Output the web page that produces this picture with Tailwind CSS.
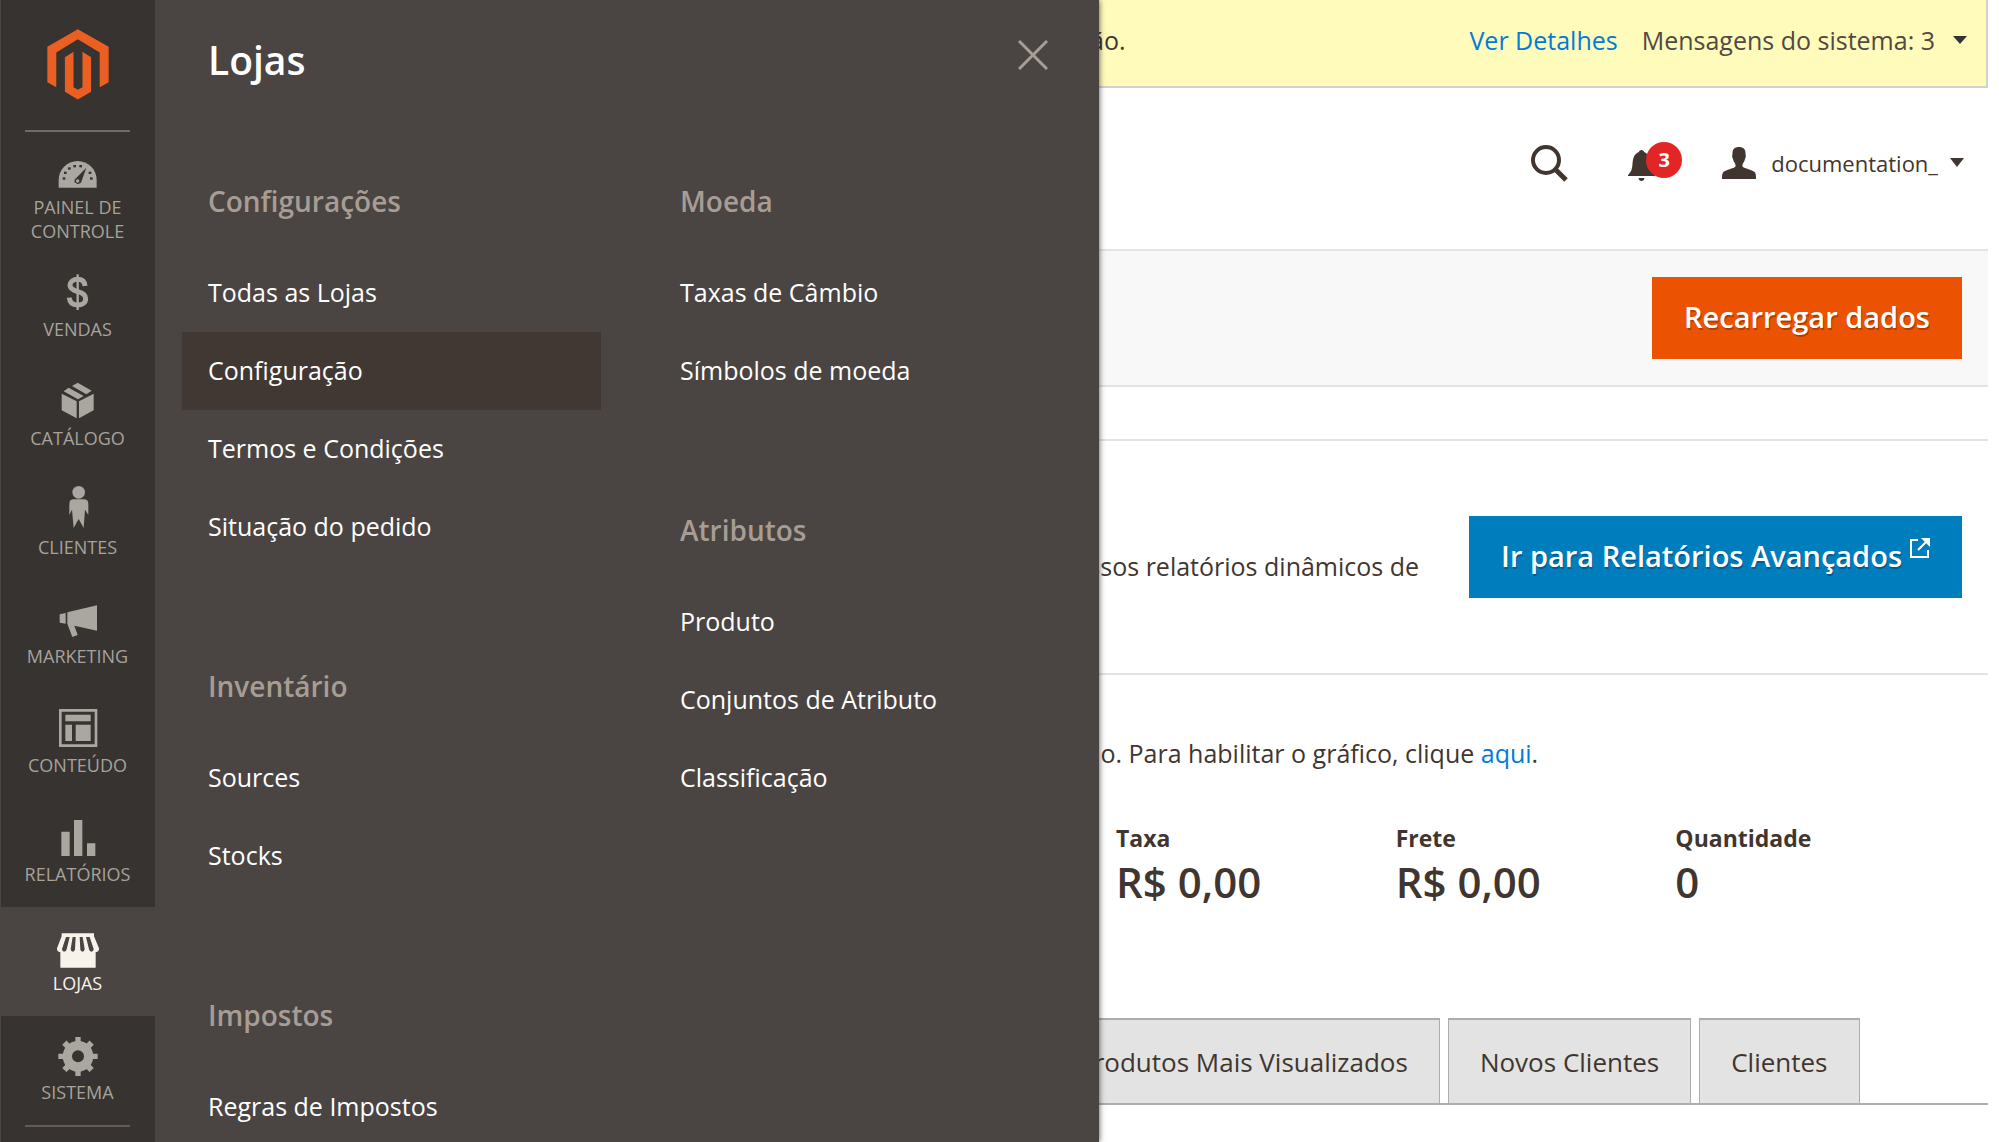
<!DOCTYPE html>
<html lang="pt-BR">
<head>
<meta charset="utf-8">
<title>Lojas</title>
<script src="https://cdn.jsdelivr.net/npm/@tailwindcss/browser@4"></script>
</head>
<body class="relative flex min-h-screen overflow-x-hidden bg-white font-['Open_Sans',sans-serif] text-[25px] leading-9 text-[#41362f]">

<!-- Main menu -->
<nav aria-label="Menu principal" class="z-20 w-[155px] shrink-0 bg-[#373330] text-center text-[18px] leading-6 text-[#a6a29c] shadow-[inset_1px_0_0_#4a4542]">
  <a href="#" aria-label="Magento" class="flex h-[130px] justify-center pt-[29px]">
    <svg class="h-[71px] w-[62px]" viewBox="139 87 187 213" fill="#eb5f22"><path d="M232 87 325 140V247L298 262V157L232 117 167 157V262L140 247V140Z"/><path d="M193 172 219 155V262L232 270 246 262V155L272 172V276L232 299 193 276Z"/></svg>
  </a>
  <hr class="mx-[25px] border-t-2 border-[#736963]">
  <a href="#" class="flex h-[121px] flex-col items-center pt-3">
    <svg class="mb-[3px] size-12 shrink-0" viewBox="160 432 144 144"><path fill="#aaa6a0" d="M174 563V540C174 508 200 483 231 483S288 508 288 540V563Z"/><g fill="#373330"><rect x="186" y="532" width="8" height="7"/><rect x="190" y="515" width="8" height="7"/><rect x="202" y="502" width="8" height="7"/><rect x="218" y="495" width="8" height="7"/><rect x="236" y="495" width="8" height="7"/><rect x="264" y="515" width="8" height="7"/><rect x="268" y="532" width="8" height="7"/><path d="M257 503 241 548 231 553 221 546 223 538Z"/></g><circle cx="231" cy="543" r="5" fill="#aaa6a0"/></svg>
    <span>PAINEL DE<br>CONTROLE</span>
  </a>
  <a href="#" class="flex h-[109px] flex-col items-center pt-[13px]">
    <svg class="mb-[3px] size-12 shrink-0" viewBox="160 798 144 144" fill="none" stroke="#aaa6a0"><path stroke-width="15" d="M253 858C252 845 244 838 231 838 217 838 208 846 208 856 208 867 217 871 231 875 247 879 255 885 255 896 255 908 245 915 231 915 216 915 207 907 206 893"/><path stroke-width="7" d="M231 823V930"/></svg>
    <span>VENDAS</span>
  </a>
  <a href="#" class="flex h-[109px] flex-col items-center pt-[13px]">
    <svg class="mb-[3px] size-12 shrink-0" viewBox="160 105 144 144" fill="#aaa6a0"><path d="M183 161 228 184V235L183 211Z"/><path d="M279 161 235 184V235L279 211Z"/><path d="M204 143 249 168 232 178 189 154Z"/><path d="M231 128 273 152 257 163 214 138Z"/></svg>
    <span>CATÁLOGO</span>
  </a>
  <a href="#" class="flex h-[109px] flex-col items-center pt-[13px]">
    <svg class="mb-[3px] size-12 shrink-0" viewBox="160 432 144 144" fill="#aaa6a0"><circle cx="234" cy="457" r="19"/><path d="M217 478H251Q263 479 263 492V525L253 509 249 564 234 537 219 564 214 509 206 525V492Q206 479 217 478Z"/></svg>
    <span>CLIENTES</span>
  </a>
  <a href="#" class="flex h-[109px] flex-col items-center pt-[13px]">
    <svg class="mb-[3px] size-12 shrink-0" viewBox="160 759 144 144" fill="#aaa6a0"><path d="M177 823 195 819V851L177 848Z"/><path d="M200 817 289 796V872L221 857 231 885 215 891 200 851Z"/></svg>
    <span>MARKETING</span>
  </a>
  <a href="#" class="flex h-[109px] flex-col items-center pt-[13px]">
    <svg class="mb-[3px] size-12 shrink-0" viewBox="160 66 144 144" fill="#aaa6a0"><path fill-rule="evenodd" d="M175 87H290V201H175ZM183 95V193H282V95Z"/><path d="M194 104H270V124H194ZM194 134H214V183H194ZM225 134H270V183H225Z"/></svg>
    <span>CONTEÚDO</span>
  </a>
  <a href="#" class="flex h-[109px] flex-col items-center pt-[13px]">
    <svg class="mb-[3px] size-12 shrink-0" viewBox="160 393 144 144" fill="#aaa6a0"><path d="M182 455H207V528H182ZM220 420H245V528H220ZM259 490H284V528H259Z"/></svg>
    <span>RELATÓRIOS</span>
  </a>
  <a href="#" aria-current="page" class="flex h-[109px] flex-col items-center bg-[#4a4542] pt-[13px] text-[#f7f3eb]">
    <svg class="mb-[3px] size-12 shrink-0" viewBox="160 720 144 144"><path fill="#f7f3eb" d="M183 760H280V769L295 805Q296 815 285 817V863H179V817Q168 815 169 805L183 769Z"/><g fill="#4a4542"><path d="M196 771H207L198 808Q197 815 190 815 184 814 184 807Z"/><path d="M216 771H225L223 808Q222 815 216 815 210 814 210 807Z"/><path d="M237 771H246L252 807Q252 814 246 815 240 815 239 808Z"/><path d="M256 771H267L279 807Q279 814 273 815 266 815 265 808Z"/></g></svg>
    <span>LOJAS</span>
  </a>
  <a href="#" class="flex h-[109px] flex-col items-center pt-[13px]">
    <svg class="mb-[3px] size-12 shrink-0" viewBox="160 1047 144 144" fill="none" stroke="#aaa6a0"><circle cx="232" cy="1129" r="32" stroke-width="28"/><g stroke-width="18" stroke-linejoin="round"><path d="M232 1089V1071M232 1169V1188M192 1129H173M272 1129H291" stroke-width="16"/><path d="M203 1100 191 1088M261 1100 273 1088M203 1158 191 1170M261 1158 273 1170"/></g></svg>
    <span>SISTEMA</span>
  </a>
  <hr class="mx-[25px] border-t-2 border-[#665c55]">
</nav>

<!-- Store submenu, laid over the dashboard -->
<section aria-label="Lojas" class="absolute inset-y-0 left-[155px] z-10 w-[944px] overflow-hidden bg-[#4a4542] pl-[27px] text-white shadow-[0_0_6px_rgba(0,0,0,0.7)]">
  <header class="flex h-[183px] items-start justify-between pr-[51px] pl-[26px]">
    <h2 class="pt-9 text-[39px] leading-12 font-semibold">Lojas</h2>
    <button type="button" aria-label="Fechar" class="pt-10"><svg class="size-[30px]" viewBox="0 0 30 30" stroke="#a79d95" stroke-width="3" fill="none"><path d="M1 1 29 29M29 1 1 29"/></svg></button>
  </header>
  <div class="grid grid-cols-[419px_419px] gap-x-[53px]">
    <div class="flex flex-col gap-[102px]">
      <div>
        <h3 class="mb-[35px] pl-[26px] text-[28px] font-semibold text-[#a79d95]">Configurações</h3>
        <ul>
          <li><a href="#" class="flex h-[78px] items-center pb-0.5 pl-[26px]">Todas as Lojas</a></li>
          <li><a href="#" class="flex h-[78px] items-center bg-[#413834] pb-0.5 pl-[26px]">Configuração</a></li>
          <li><a href="#" class="flex h-[78px] items-center pb-0.5 pl-[26px]">Termos e Condições</a></li>
          <li><a href="#" class="flex h-[78px] items-center pb-0.5 pl-[26px]">Situação do pedido</a></li>
        </ul>
      </div>
      <div>
        <h3 class="mb-[35px] pl-[26px] text-[28px] font-semibold text-[#a79d95]">Inventário</h3>
        <ul>
          <li><a href="#" class="flex h-[78px] items-center pb-0.5 pl-[26px]">Sources</a></li>
          <li><a href="#" class="flex h-[78px] items-center pb-0.5 pl-[26px]">Stocks</a></li>
        </ul>
      </div>
      <div>
        <h3 class="mb-[35px] pl-[26px] text-[28px] font-semibold text-[#a79d95]">Impostos</h3>
        <ul>
          <li><a href="#" class="flex h-[78px] items-center pb-0.5 pl-[26px]">Regras de Impostos</a></li>
        </ul>
      </div>
    </div>
    <div class="flex flex-col gap-[102px]">
      <div>
        <h3 class="mb-[35px] pl-[26px] text-[28px] font-semibold text-[#a79d95]">Moeda</h3>
        <ul>
          <li><a href="#" class="flex h-[78px] items-center pb-0.5 pl-[26px]">Taxas de Câmbio</a></li>
          <li><a href="#" class="flex h-[78px] items-center pb-0.5 pl-[26px]">Símbolos de moeda</a></li>
        </ul>
      </div>
      <div>
        <h3 class="mb-[35px] pl-[26px] text-[28px] font-semibold text-[#a79d95]">Atributos</h3>
        <ul>
          <li><a href="#" class="flex h-[78px] items-center pb-0.5 pl-[26px]">Produto</a></li>
          <li><a href="#" class="flex h-[78px] items-center pb-0.5 pl-[26px]">Conjuntos de Atributo</a></li>
          <li><a href="#" class="flex h-[78px] items-center pb-0.5 pl-[26px]">Classificação</a></li>
        </ul>
      </div>
    </div>
  </div>
</section>

<!-- Dashboard -->
<main class="mr-[11px] min-w-0 flex-1 whitespace-nowrap">
  <div class="flex h-22 items-center border-r-2 border-b-2 border-[#d1d1d1] bg-[#fffbbb] pr-[19px] pb-1.5 pl-[935px]">
    <p>ão.</p>
    <a href="#" class="ml-auto text-[#007bdb]">Ver Detalhes</a>
    <button type="button" class="ml-6 flex items-center gap-[18px] text-[#514943]">Mensagens do sistema: 3
      <svg class="h-2 w-[14px]" viewBox="0 0 14 8" fill="#333"><path d="M0 0H14L7 8Z"/></svg>
    </button>
  </div>
  <header class="flex h-[161px] items-center justify-end pr-6 pb-[10px]">
    <button type="button" aria-label="Buscar"><svg class="size-[37px]" viewBox="0 0 37 37" fill="none" stroke="#41362f"><circle cx="15" cy="15" r="13" stroke-width="4"/><path d="M24 24 35 35" stroke-width="5"/></svg></button>
    <button type="button" aria-label="Notificações" class="relative ml-[60px] h-9 w-[54px]">
      <svg class="mt-1 h-8 w-[27px]" viewBox="0 0 27 32" fill="#41362f"><path d="M13.500 0C15 0 16 1 16 2 21 4 22 8 22.500 14 23 20 24 22 27 25V26H0V25C3 22 4 20 4.500 14 5 8 6 4 11 2 11 1 12 0 13.500 0ZM10.500 28H16.500Q16 31 13.500 31T10.500 28Z"/></svg>
      <span class="absolute -top-1 right-0 flex size-9 items-center justify-center rounded-full bg-[#e22626] text-[20px] font-bold text-white">3</span>
    </button>
    <button type="button" class="ml-10 flex items-center pb-0.5 text-[22px]">
      <svg class="mr-[15px] h-8 w-[34px]" viewBox="0 0 34 32" fill="#41362f"><path d="M17 0C21 0 23.500 2 23.500 6 23.500 9 24.500 9 23 12 22.500 15 20.500 16 20.500 18V19.500C22 21.500 31 23 33 25.500 34 27 34 29 34 32H0C0 29 0 27 1 25.500 3 23 12 21.500 13.500 19.500V18C13.500 16 11.500 15 11 12 9.500 9 10.500 9 10.500 6 10.500 2 13 0 17 0Z"/></svg>
      documentation_
      <svg class="ml-3 h-[9px] w-[14px]" viewBox="0 0 14 9" fill="#41362f"><path d="M0 0H14L7 9Z"/></svg>
    </button>
  </header>
  <div class="flex h-[138px] items-center justify-end border-y-2 border-[#e3e3e3] bg-[#f8f8f8] pr-[26px]">
    <button type="button" class="h-[82px] bg-[#eb5202] px-8 pb-0.5 text-[29px] font-semibold text-white text-shadow-[1px_2px_0_rgba(0,0,0,0.25)]">Recarregar dados</button>
  </div>
  <div class="h-[52px]"></div>
  <section class="flex h-[236px] items-center justify-end gap-[50px] border-y-2 border-[#e3e3e3] pr-[26px]">
    <p class="pt-[18px]">nossos relatórios dinâmicos de</p>
    <a href="#" class="flex h-[82px] items-center gap-2 bg-[#007dbd] px-8 pb-0.5 text-[29px] font-semibold text-white text-shadow-[1px_2px_0_rgba(0,0,0,0.25)]">Ir para Relatórios Avançados
      <svg class="mb-4 size-5" viewBox="0 0 20 20" fill="none" stroke="#fff" stroke-width="2"><path d="M8 2H1V19H18V12M8 12 17 3"/><path d="M11 0H20V9Z" fill="#fff" stroke="none"/></svg>
    </a>
  </section>
  <p class="mt-[60px] pl-[818px]">desabilitado. Para habilitar o gráfico, clique <a href="#" class="text-[#007bdb]">aqui</a>.</p>
  <dl class="mt-[49px] mr-[33px] ml-[961px] grid grid-cols-3">
    <div><dt class="text-[23px] font-bold">Taxa</dt><dd class="text-[42px] leading-[52px] font-semibold">R$ 0,00</dd></div>
    <div><dt class="text-[23px] font-bold">Frete</dt><dd class="text-[42px] leading-[52px] font-semibold">R$ 0,00</dd></div>
    <div><dt class="text-[23px] font-bold">Quantidade</dt><dd class="text-[42px] leading-[52px] font-semibold">0</dd></div>
  </dl>
  <div role="tablist" class="mt-[110px] flex gap-2 border-b-2 border-[#adadad] pl-[891px] text-[26px]">
    <button type="button" role="tab" class="h-[85px] border border-b-0 border-t-2 border-[#adadad] bg-[#e3e3e3] px-[31px]">Produtos Mais Visualizados</button>
    <button type="button" role="tab" class="h-[85px] border border-b-0 border-t-2 border-[#adadad] bg-[#e3e3e3] px-[31px]">Novos Clientes</button>
    <button type="button" role="tab" class="h-[85px] border border-b-0 border-t-2 border-[#adadad] bg-[#e3e3e3] px-[31px]">Clientes</button>
  </div>
</main>
</body>
</html>
